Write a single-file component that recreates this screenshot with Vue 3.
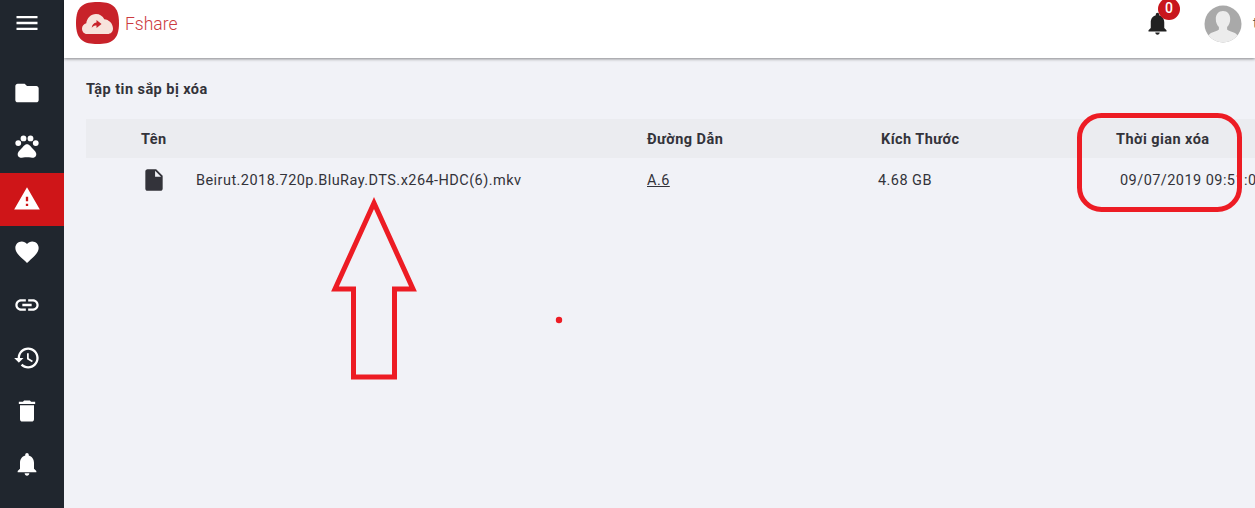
<script setup>
const bellPath = 'M12 22c1.1 0 2-.9 2-2h-4c0 1.1.89 2 2 2zm6-6v-5c0-3.07-1.64-5.64-4.5-6.32V4c0-.83-.67-1.5-1.5-1.5s-1.5.67-1.5 1.5v.68C7.63 5.36 6 7.92 6 11v5l-2 2v1h16v-1l-2-2z';

const navItems = [
  { name: 'folder', d: 'M10 4H4c-1.1 0-1.99.9-1.99 2L2 18c0 1.1.9 2 2 2h16c1.1 0 2-.9 2-2V8c0-1.1-.9-2-2-2h-8l-2-2z' },
  { name: 'pets', d: 'M4.5 7a2.5 2.5 0 1 1 0 5 2.5 2.5 0 0 1 0-5zM9 3a2.5 2.5 0 1 1 0 5 2.5 2.5 0 0 1 0-5zM15 3a2.5 2.5 0 1 1 0 5 2.5 2.5 0 0 1 0-5zM19.5 7a2.5 2.5 0 1 1 0 5 2.5 2.5 0 0 1 0-5zM17.34 14.86c-.87-1.02-1.6-1.89-2.48-2.91-.46-.54-1.05-1.08-1.75-1.32-.11-.04-.22-.07-.33-.09-.25-.04-.52-.04-.78-.04s-.53 0-.79.05c-.11.02-.22.05-.33.09-.7.24-1.28.78-1.75 1.32-.87 1.02-1.6 1.89-2.48 2.91-1.31 1.31-2.92 2.76-2.62 4.79.29 1.02 1.02 2.03 2.33 2.32.73.15 3.06-.44 5.54-.44h.18c2.48 0 4.81.58 5.54.44 1.31-.29 2.04-1.31 2.33-2.32.31-2.04-1.3-3.49-2.61-4.8z' },
  { name: 'warning', active: true, d: 'M1 21h22L12 2 1 21zm12-3h-2v-2h2v2zm0-4h-2v-4h2v4z' },
  { name: 'favorite', d: 'M12 21.35l-1.45-1.32C5.4 15.36 2 12.28 2 8.5 2 5.42 4.42 3 7.5 3c1.74 0 3.41.81 4.5 2.09C13.09 3.81 14.76 3 16.5 3 19.58 3 22 5.42 22 8.5c0 3.78-3.4 6.86-8.55 11.54L12 21.35z' },
  { name: 'link', d: 'M3.9 12c0-1.71 1.39-3.1 3.1-3.1h4V7H7c-2.76 0-5 2.24-5 5s2.24 5 5 5h4v-1.9H7c-1.71 0-3.1-1.39-3.1-3.1zM8 13h8v-2H8v2zm9-6h-4v1.9h4c1.71 0 3.1 1.39 3.1 3.1s-1.39 3.1-3.1 3.1h-4V17h4c2.76 0 5-2.24 5-5s-2.24-5-5-5z' },
  { name: 'history', d: 'M13 3c-4.97 0-9 4.03-9 9H1l3.89 3.89.07.14L9 12H6c0-3.87 3.13-7 7-7s7 3.13 7 7-3.13 7-7 7c-1.93 0-3.68-.79-4.94-2.06l-1.42 1.42C8.27 19.99 10.51 21 13 21c4.97 0 9-4.03 9-9s-4.03-9-9-9zm-1 5v5l4.28 2.54.72-1.21-3.5-2.08V8H12z' },
  { name: 'delete', d: 'M6 19c0 1.1.9 2 2 2h8c1.1 0 2-.9 2-2V7H6v12zM19 4h-3.5l-1-1h-5l-1 1H5v2h14V4z' },
  { name: 'notifications', d: bellPath },
];
</script>

<template>
  <div class="page">
    <aside class="sidebar">
      <button class="menu-btn">
        <svg width="28" height="28" viewBox="0 0 24 24"><path d="M3 18h18v-2H3v2zm0-5h18v-2H3v2zm0-7v2h18V6H3z" /></svg>
      </button>
      <nav class="nav">
        <a v-for="item in navItems" :key="item.name" class="nav-item" :class="{ active: item.active }">
          <svg width="28" height="28" viewBox="0 0 24 24"><path :d="item.d" /></svg>
        </a>
      </nav>
    </aside>

    <div class="main">
      <header class="topbar">
        <div class="brand">
          <svg class="logo" width="45" height="45" viewBox="0 0 45 45">
            <path d="M22.500 2C36 2 44 5.500 44 23S36 44 22.500 44 1 40.500 1 23 9 2 22.500 2z" fill="#c8222a" />
            <path d="M12 34c-3 0-5-2.500-5-5.500 0-2.600 1.800-4.700 4.300-5.300.6-5 4.500-9.200 9.700-9.200 3.700 0 6.700 2 8.300 5.200 4.300.3 8.700 4 8.700 9.300 0 3.300-2.300 5.500-5.500 5.500H12z" fill="#f7e3dc" />
            <path d="M21.500 20l5 4-5 4v-2.500c-2 0-3.500.5-4.800 2.200.3-2.800 2-4.900 4.800-5.200V20z" fill="#c8222a" />
          </svg>
          <span class="brand-name">Fshare</span>
        </div>
        <div class="top-actions">
          <div class="bell">
            <svg width="27" height="27" viewBox="0 0 24 24"><path :d="bellPath" /></svg>
            <span class="badge">0</span>
          </div>
          <svg class="avatar" width="38" height="38" viewBox="0 0 38 38">
            <defs><clipPath id="avatar-clip"><circle cx="19" cy="19" r="18.500" /></clipPath></defs>
            <circle cx="19" cy="19" r="18.500" fill="#a9a9a9" />
            <g clip-path="url(#avatar-clip)" fill="#ececec">
              <path d="M19 6c4.500 0 7.200 3.300 7.200 8 0 3.300-1.200 6.300-3.100 8v2.500c1 1.400 6.400 2.400 8.900 4.300 1.500 1.100 2 3 2 9.200H4c0-6.200.5-8.100 2-9.200 2.500-1.900 7.900-2.900 8.900-4.300V22c-1.900-1.700-3.100-4.700-3.100-8 0-4.700 2.700-8 7.200-8z" />
            </g>
          </svg>
          <span class="user-name">test</span>
        </div>
      </header>

      <main class="content">
        <h1 class="title">Tập tin sắp bị xóa</h1>
        <div class="table">
          <div class="row head">
            <span class="col-name">Tên</span>
            <span class="col-path">Đường Dẫn</span>
            <span class="col-size">Kích Thước</span>
            <span class="col-time">Thời gian xóa</span>
          </div>
          <div class="row body">
            <span class="col-name file">
              <svg width="26" height="26" viewBox="0 0 24 24"><path d="M6 2c-1.100 0-1.990.9-1.990 2L4 20c0 1.100.89 2 1.990 2H18c1.100 0 2-.9 2-2V8l-6-6H6zm7 7V3.500L18.500 9H13z" /></svg>
              Beirut.2018.720p.BluRay.DTS.x264-HDC(6).mkv
            </span>
            <span class="col-path"><a class="path-link">A.6</a></span>
            <span class="col-size">4.68 GB</span>
            <span class="col-time">09/07/2019 09:51:00</span>
          </div>
        </div>
      </main>
    </div>

    <svg class="marks" width="1255" height="508" viewBox="0 0 1255 508">
      <rect x="1079.500" y="115.500" width="160" height="94" rx="22" />
      <polygon points="374,203 335,289 353.500,289 353.500,377 394.500,377 394.500,289 413,289" />
      <circle cx="559" cy="320" r="3.200" class="dot" />
    </svg>
  </div>
</template>

<style>
html,
body {
  margin: 0;
  overflow: hidden;
}
</style>

<style scoped>
.page {
  position: relative;
  display: flex;
  width: 100vw;
  height: 100vh;
  overflow: hidden;
  background: #f1f2f7;
  font-family: Roboto, "Noto Sans", sans-serif;
  font-size: 14.500px;
  letter-spacing: 0.45px;
  color: #33333a;
}
.sidebar {
  flex: none;
  width: 64px;
  background: #20262e;
}
.menu-btn {
  display: flex;
  align-items: center;
  justify-content: center;
  width: 53px;
  height: 46px;
  padding: 0;
  border: 0;
  background: none;
}
.menu-btn svg,
.nav-item svg {
  fill: #fff;
}
.nav {
  margin-top: 21px;
}
.nav-item {
  display: flex;
  align-items: center;
  height: 53px;
  padding-left: 13px;
}
.nav-item svg {
  margin-top: -1px;
}
.nav-item.active {
  background: #cf1518;
}
.main {
  flex: 1;
  min-width: 0;
  display: flex;
  flex-direction: column;
}
.topbar {
  flex: none;
  display: flex;
  align-items: center;
  justify-content: space-between;
  height: 58px;
  padding-left: 11px;
  background: #fff;
  box-shadow: 0 1px 3px rgba(0, 0, 0, 0.45);
  z-index: 1;
}
.brand {
  display: flex;
  align-items: center;
  gap: 5px;
  margin-top: -13px;
}
.brand-name {
  margin-top: 3px;
  font-size: 17.500px;
  font-weight: 300;
  letter-spacing: 0;
  color: #cc3a40;
}
.top-actions {
  display: flex;
  align-items: center;
  margin-right: -22px;
  margin-top: -11px;
}
.bell {
  position: relative;
  display: flex;
  margin-right: 33px;
}
.bell svg {
  fill: #212121;
}
.badge {
  position: absolute;
  top: -12px;
  left: 14px;
  width: 22px;
  height: 22px;
  border-radius: 50%;
  background: #c8161d;
  color: #fff;
  font-size: 14px;
  font-weight: 500;
  letter-spacing: 0;
  line-height: 21px;
  text-align: center;
}
.avatar {
  flex: none;
}
.user-name {
  margin-left: 11px;
  width: 24px;
  color: #555;
}
.content {
  flex: 1;
  padding: 0 0 0 22px;
}
.title {
  margin: 23px 0 20px;
  font-size: 14.500px;
  line-height: 18px;
  font-weight: 700;
  color: #33333a;
}
.table {
  width: 1300px;
}
.row {
  display: grid;
  grid-template-columns: 561px 234px 235px 1fr;
  align-items: center;
}
.head {
  box-sizing: border-box;
  height: 39px;
  padding-top: 2px;
  background: #ebecf0;
  font-weight: 700;
}
.body {
  height: 44px;
}
.col-name {
  padding-left: 55px;
}
.file {
  display: flex;
  align-items: center;
  gap: 29px;
}
.file svg {
  fill: #33333a;
  flex: none;
}
.body .col-size {
  margin-left: -3px;
}
.body .col-time {
  margin-left: 4px;
}
.path-link {
  color: #33333a;
  text-decoration: underline;
}
.marks {
  position: absolute;
  inset: 0;
  pointer-events: none;
  z-index: 2;
  fill: none;
  stroke: #ed1c24;
  stroke-width: 5;
}
.marks .dot {
  fill: #ed1c24;
  stroke: none;
}
</style>
